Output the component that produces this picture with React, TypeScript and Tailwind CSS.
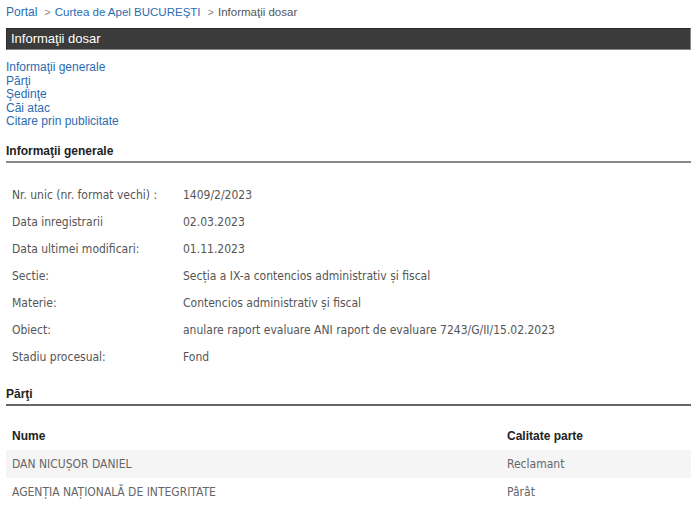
import React from "react";

const rows: [string, string][] = [
  ["Nr. unic (nr. format vechi) :", "1409/2/2023"],
  ["Data inregistrarii", "02.03.2023"],
  ["Data ultimei modificari:", "01.11.2023"],
  ["Sectie:", "Secția a IX-a contencios administrativ și fiscal"],
  ["Materie:", "Contencios administrativ și fiscal"],
  ["Obiect:", "anulare raport evaluare ANI raport de evaluare 7243/G/II/15.02.2023"],
  ["Stadiu procesual:", "Fond"],
];

const parti: [string, string][] = [
  ["DAN NICUȘOR DANIEL", "Reclamant"],
  ["AGENȚIA NAȚIONALĂ DE INTEGRITATE", "Pârât"],
];

const cond = "font-['DejaVu_Sans_Condensed','DejaVu_Sans',sans-serif] [font-stretch:condensed]";

export default function App() {
  return (
    <div className="w-[700px] h-[510px] overflow-hidden bg-white font-['Liberation_Sans',Arial,sans-serif] px-[6px] pt-[5px]">
      <div className="w-[685px]">
        <div className="text-[11.5px] leading-[14px] flex text-[#555] items-center">
          <span className="text-[12px] text-[#2b6cb0]">Portal</span>
          <span className="text-[#888] text-[11px] ml-[7px] mr-[4px]">&gt;</span>
          <span className="text-[#2b6cb0]">Curtea de Apel BUCUREŞTI</span>
          <span className="text-[#888] text-[11px] ml-[7px] mr-[4px]">&gt;</span>
          <span>Informaţii dosar</span>
        </div>
        <div className="mt-[9px] h-[22px] bg-[#3b3b3b] border border-[#2a2a2a] border-b-[#888] border-r-[#888] flex items-center pl-[4px] text-white text-[13px]">
          Informaţii dosar
        </div>
        <div className="mt-[11px] flex flex-col text-[12px] leading-[13.5px] text-[#2b6cb0]">
          <span>Informaţii generale</span>
          <span>Părţi</span>
          <span>Şedinţe</span>
          <span>Căi atac</span>
          <span>Citare prin publicitate</span>
        </div>
        <div className="mt-[15px] pb-[3px] border-b-2 border-[#8a8a8a] text-[12px] font-bold leading-[14px] text-[#222]">
          Informaţii generale
        </div>
        <div className={`mt-[19px] flex flex-col text-[12px] text-[#555] ${cond}`}>
          {rows.map(([k, v]) => (
            <div key={k} className="flex h-[27px] items-center pl-[6px]">
              <span className="w-[171px] shrink-0">{k}</span>
              <span>{v}</span>
            </div>
          ))}
        </div>
        <div className="mt-[16px] pb-[3px] border-b-2 border-[#666] text-[12px] font-bold leading-[14px] text-[#222]">
          Părţi
        </div>
        <div className="mt-[16px]">
          <div className="flex h-[28px] items-center pl-[6px] text-[12px] font-bold text-[#222]">
            <span className="w-[495px]">Nume</span>
            <span>Calitate parte</span>
          </div>
          {parti.map(([n, c], i) => (
            <div key={n} className={`flex h-[28px] items-center pl-[6px] text-[12px] text-[#666] ${cond} ${i === 0 ? "bg-[#f5f5f5]" : ""}`}>
              <span className="w-[495px]">{n}</span>
              <span>{c}</span>
            </div>
          ))}
        </div>
      </div>
    </div>
  );
}
